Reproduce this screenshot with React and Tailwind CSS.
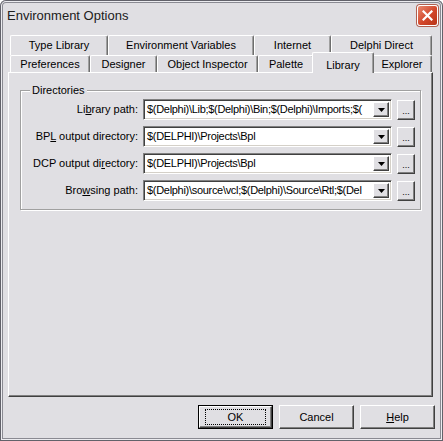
import React from 'react';

const font = { fontFamily: '"Liberation Sans", Arial, sans-serif' };

const backTabs = [
  ['Type Library', 98],
  ['Environment Variables', 146],
  ['Internet', 77],
  ['Delphi Direct', 101],
];

const frontTabs = [
  ['Preferences', 80],
  ['Designer', 67],
  ['Object Inspector', 101],
  ['Palette', 56],
  ['Library', 58, true],
  ['Explorer', 60],
];

const rows = [
  { label: <>Li<u>b</u>rary path:</>, value: '$(Delphi)\\Lib;$(Delphi)\\Bin;$(Delphi)\\Imports;$(' },
  { label: <>BP<u>L</u> output directory:</>, value: '$(DELPHI)\\Projects\\Bpl' },
  { label: <>DCP output di<u>r</u>ectory:</>, value: '$(DELPHI)\\Projects\\Bpl' },
  { label: <>Bro<u>w</u>sing path:</>, value: '$(Delphi)\\source\\vcl;$(Delphi)\\Source\\Rtl;$(Del' },
];

function Tab({ label, width, active, height }) {
  if (active) {
    return (
      <div
        className="relative z-10 -mx-[2px] -mt-[3px] -mb-[1px] flex items-start justify-center rounded-t-[2px] border-l border-t border-r border-white border-r-[#6e6e6e] bg-[#e0dfe3] pt-[4px] shadow-[inset_-1px_0_0_#a0a0a0]"
        style={{ width: width + 4, height: height + 4 }}
      >
        {label}
      </div>
    );
  }
  return (
    <div
      className="flex items-center justify-center rounded-t-[2px] border-l border-t border-r border-white border-r-[#6e6e6e] bg-[#e0dfe3] shadow-[inset_-1px_0_0_#a0a0a0]"
      style={{ width, height }}
    >
      {label}
    </div>
  );
}

function Combo({ value }) {
  return (
    <div className="flex h-[21px] w-[249px] items-stretch border border-[#808080] border-r-white border-b-white bg-white shadow-[inset_1px_1px_0_#404040,inset_-1px_-1px_0_#d4d0c8]">
      <div className="min-w-0 flex-1 overflow-hidden whitespace-nowrap pl-[3px] pt-[2px] leading-[14px] tracking-[-0.3px]">{value}</div>
      <div className="my-[2px] mr-[2px] ml-[3px] flex w-[16px] shrink-0 items-center justify-center border border-white border-r-[#404040] border-b-[#404040] bg-[#e0dfe3] shadow-[inset_-1px_-1px_0_#808080]">
        <svg width="7" height="4" viewBox="0 0 7 4">
          <path d="M0 0h7L3.5 4z" fill="#000" />
        </svg>
      </div>
    </div>
  );
}

function Button({ children, isDefault, width = 75 }) {
  return (
    <div
      className={`flex h-[24px] items-center justify-center bg-[#e0dfe3] ${isDefault ? 'border border-black' : ''}`}
      style={{ width }}
    >
      <div className="flex h-full w-full items-center justify-center border border-white border-r-[#404040] border-b-[#404040] shadow-[inset_-1px_-1px_0_#808080]">
        {isDefault ? (
          <div className="flex h-[16px] w-[61px] items-center justify-center border border-dotted border-black">{children}</div>
        ) : (
          children
        )}
      </div>
    </div>
  );
}

export default function App() {
  return (
    <div
      className="flex h-[441px] w-[443px] flex-col overflow-hidden rounded-t-[6px] bg-[#e0dfe3] text-[11px] text-black shadow-[inset_0_0_0_1px_#62626a,inset_0_0_0_2px_#ececf0,inset_0_0_0_3px_#8a8a92]"
      style={font}
    >
      {/* title bar */}
      <div className="flex h-[29px] items-center justify-between pl-[7px] pr-[5px] pt-[2px]">
        <span className="text-[13px] text-[#202020]">Environment Options</span>
        <div className="flex h-[21px] w-[21px] items-center justify-center rounded-[3px] border border-white bg-[linear-gradient(135deg,#e88a70,#d2462a_55%,#b83418)] shadow-[0_0_0_1px_#b06050]">
          <svg width="11" height="11" viewBox="0 0 11 11">
            <path d="M1.5 1.5l8 8M9.5 1.5l-8 8" stroke="#fff" strokeWidth="2.2" strokeLinecap="square" />
          </svg>
        </div>
      </div>

      {/* tabs */}
      <div className="mt-[6px] ml-[10px] flex">
        {backTabs.map(([l, w]) => (
          <Tab key={l} label={l} width={w} height={20} />
        ))}
      </div>
      <div className="ml-[10px] flex">
        {frontTabs.map(([l, w, a]) => (
          <Tab key={l} label={l} width={w} height={17} active={a} />
        ))}
      </div>

      {/* tab page */}
      <div className="ml-[8px] h-[325px] w-[425px] border border-white border-r-[#404040] border-b-[#404040] pl-[11px] pt-[17px] shadow-[inset_-1px_-1px_0_#808080]">
        <div className="relative flex h-[120px] w-[401px] flex-col gap-[6px] border border-[#a0a0a0] pt-[8px] shadow-[inset_1px_1px_0_#fff,1px_1px_0_#fff]">
          <span className="absolute -top-[7px] left-[9px] bg-[#e0dfe3] px-[2px] leading-[13px]">Directories</span>
          {rows.map((r, i) => (
            <div key={i} className="flex h-[21px] items-center">
              <div className="w-[117px] text-right">{r.label}</div>
              <div className="ml-[5px]">
                <Combo value={r.value} />
              </div>
              <div className="ml-[5px] flex h-[20px] w-[18px] items-end justify-center border border-white border-r-[#404040] border-b-[#404040] pb-[3px] text-[9px] leading-[9px] shadow-[inset_-1px_-1px_0_#808080]">
                ...
              </div>
            </div>
          ))}
        </div>
      </div>

      {/* buttons */}
      <div className="mt-[8px] ml-[198px] flex gap-[6px]">
        <Button isDefault>OK</Button>
        <Button>Cancel</Button>
        <Button>
          <span>
            <u>H</u>elp
          </span>
        </Button>
      </div>
    </div>
  );
}
